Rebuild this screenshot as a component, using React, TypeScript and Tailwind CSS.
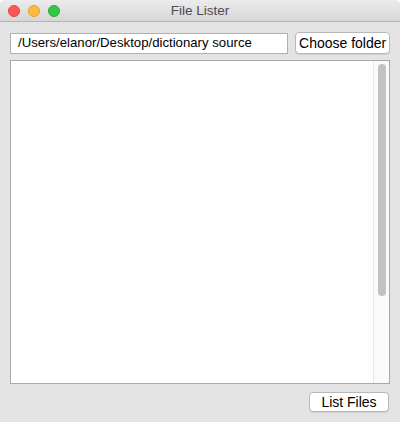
import React from "react";

export default function App() {
  return (
    <div
      className="w-[400px] h-[422px] bg-[#e3e3e3] flex flex-col overflow-hidden rounded-t-[5px]"
      style={{ fontFamily: '"Liberation Sans", Arial, sans-serif' }}
    >
      <div className="h-[22px] shrink-0 relative flex items-center justify-center bg-gradient-to-b from-[#ececec] to-[#d6d6d6] border-b border-[#b4b4b4]">
        <div className="absolute left-[8px] top-[5px] flex gap-[8px]">
          <div className="w-[12px] h-[12px] rounded-full bg-[#fc5753] border border-[#df4744]" />
          <div className="w-[12px] h-[12px] rounded-full bg-[#fdbc40] border border-[#de9f34]" />
          <div className="w-[12px] h-[12px] rounded-full bg-[#33c748] border border-[#27aa35]" />
        </div>
        <span className="text-[13.5px] text-[#4d4d4d] leading-none">File Lister</span>
      </div>
      <div className="flex flex-col px-[10px] pt-[10px] flex-1">
        <div className="flex items-center gap-[7px] h-[22px]">
          <div className="w-[279px] h-[21px] bg-white border border-[#b0b0b0] flex items-center pl-[7px] text-[13.2px] text-black leading-none">
            /Users/elanor/Desktop/dictionary source
          </div>
          <div className="w-[95px] h-[22px] bg-white border border-[#b8b8b8] rounded-[4px] flex items-center justify-center text-[14px] text-black leading-none shadow-[0_1px_0_rgba(0,0,0,0.08)]">
            Choose folder
          </div>
        </div>
        <div className="mt-[6px] h-[324px] bg-white border border-[#a9a9a9] flex justify-end">
          <div className="w-[16px] h-full bg-[#fafafa] border-l border-[#e8e8e8] flex justify-center pt-[3px]">
            <div className="w-[8px] h-[232px] rounded-full bg-[#c2c2c2]" />
          </div>
        </div>
        <div className="flex justify-end mt-[8px] pr-[1px]">
          <div className="w-[80px] h-[20px] bg-white border border-[#b8b8b8] rounded-[4px] flex items-center justify-center text-[14px] text-black leading-none shadow-[0_1px_0_rgba(0,0,0,0.08)]">
            List Files
          </div>
        </div>
      </div>
    </div>
  );
}
